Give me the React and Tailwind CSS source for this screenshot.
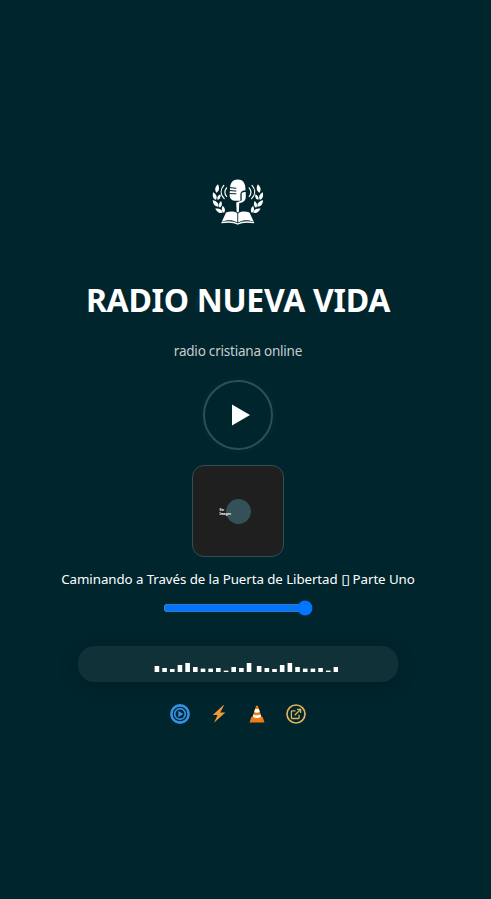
const LEVELS = [6, 4, 3, 7, 9, 5, 3.4, 3.4, 4, 1.4, 5, 4, 9, 6, 4, 3, 7, 9, 5, 3.4, 3.4, 4, 1.4, 5];

function Leaf({ x, y, r, s = 1 }) {
  return <path d="M0 4.3C-2.6 2-2.4-1.2 0-4.3C2.4-1.2 2.6 2 0 4.3Z" transform={`translate(${x} ${y}) rotate(${r}) scale(${s})`} />;
}

function Branch() {
  return (
    <g>
      <Leaf x={5.2} y={9.6} r={10} />
      <Leaf x={2.6} y={17} r={-20} s={0.95} />
      <Leaf x={7} y={18} r={28} s={0.75} />
      <Leaf x={3.6} y={24.5} r={-42} />
      <Leaf x={8.4} y={25.4} r={12} s={0.8} />
      <Leaf x={7} y={31.6} r={-62} />
      <Leaf x={11.3} y={30.4} r={-10} s={0.85} />
      <path d="M11.8 6.4C8.2 10.5 8.2 15.6 12.2 19.6M14.6 8.8C12.3 11.7 12.3 14.6 14.6 17.5" fill="none" stroke="#fff" strokeWidth="1.2" strokeLinecap="round" />
    </g>
  );
}

function Logo() {
  return (
    <svg width="52" height="46" viewBox="0 0 52 46" fill="#fff">
      <Branch />
      <g transform="translate(51.8 0) scale(-1 1)"><Branch /></g>
      <path d="M18 9.5C18 3.6 21 .4 25.8.4S33.4 3.6 33.4 9.5V11.5C29.5 11.6 28.4 13 28.4 15.8V21.8H23C19 21.5 17.6 19 17.6 15.5Z" />
      <path d="M29.7 13.9Q30.5 12.9 33.8 12.9V17.6C33.8 21.6 31.5 23.6 27.2 24.2L26.8 33.2H24.7L24.2 23.6L29.7 21.6Z" />
      <path d="M17 8.5L24.3 9.3M17 11.5L24.3 12.1M17 14.6L24.3 14.8" stroke="#00252d" strokeWidth="1" />
      <path d="M14 33.4C18.5 32 23.2 32.3 25.3 34.4V43.4C20 40.4 14.5 40.8 9.8 42.8ZM37.5 33.4C33 32 28.3 32.3 26.2 34.4V43.4C31.5 40.4 37 40.8 41.8 42.8Z" />
      <path d="M9.4 43.6C16 42.6 22 42.8 25.7 45C29.5 42.8 35.5 42.6 42.1 43.6" fill="none" stroke="#fff" strokeWidth="1.3" />
    </svg>
  );
}

function Waveform() {
  return (
    <svg width="184" height="10" viewBox="0 0 184 10" fill="#fff">
      {LEVELS.map((h, i) => (
        <rect key={i} x={0.6 + i * 7.68 + (i > 12 ? 2.4 : 0)} y={10 - h} width="4.6" height={h} />
      ))}
    </svg>
  );
}

function PlayerLinks() {
  return (
    <div className="mt-[22px] flex h-5 items-center">
      <svg width="20" height="20" viewBox="0 0 20 20" fill="none">
        <circle cx="10" cy="10" r="8.6" stroke="#3490e6" strokeWidth="2.6" />
        <circle cx="10" cy="10" r="5.3" stroke="#3490e6" strokeWidth="1.7" />
        <path d="M8.3 6.7L13.3 10L8.3 13.3Z" fill="#3490e6" />
      </svg>
      <svg className="ml-[19px]" width="20" height="20" viewBox="0 0 20 20" fill="#f09a38">
        <path d="M14.2 1.2L3.8 11H8.6L5 18.8L16.4 8.5H11.2L15 1.2Z" />
      </svg>
      <svg className="ml-[18px]" width="20" height="20" viewBox="0 0 20 20">
        <path d="M4.3 13H15.7L17.5 18.5H2.5Z" fill="#f27c13" />
        <path d="M9 2Q10 .9 11 2L15 14.5Q10 17.2 5 14.5Z" fill="#f27c13" />
        <path d="M8.1 5.1H11.9L12.8 8Q10 9.4 7.2 8ZM6.4 10.4Q10 12 13.6 10.4L14.3 12.8Q10 15.3 5.7 12.8Z" fill="#fff" />
      </svg>
      <svg className="ml-[19px]" width="20" height="20" viewBox="0 0 20 20" fill="none" stroke="#dfb35b">
        <circle cx="10" cy="10" r="9" strokeWidth="1.7" />
        <path d="M9.5 6.8H6.2Q5.4 6.8 5.4 7.6V13.7Q5.4 14.5 6.2 14.5H12.3Q13.1 14.5 13.1 13.7V10.8M8.7 11.2L14.2 5.7M11 5.3H14.6V8.9" strokeWidth="1.3" />
      </svg>
    </div>
  );
}

export default function App() {
  return (
    <main className="flex h-[899px] w-full flex-col items-center bg-[#00252d] pr-[15px] pt-[179px] font-['Noto_Sans','Open_Sans',sans-serif] text-white">
      <Logo />
      <h1 className="mt-[53px] whitespace-nowrap text-[32px] leading-[43px] font-bold tracking-[-0.3px]">RADIO NUEVA VIDA</h1>
      <p className="mt-5 text-[13.5px] leading-5 tracking-[-0.22px] whitespace-nowrap text-[#c6cccf]">radio cristiana online</p>
      <button className="mt-[19px] flex size-[70px] shrink-0 items-center justify-center rounded-full border-2 border-[#304e55] shadow-[0_0_10px_rgba(255,255,255,0.04)]">
        <svg className="ml-[5px]" width="18" height="22" viewBox="0 0 18 22" fill="#fff"><path d="M0 .5L18 11L0 21.5Z" /></svg>
      </button>
      <div className="mt-[15px] flex size-[92px] shrink-0 items-center justify-center rounded-xl border border-[#2f4f55] bg-[#1f1f1f]">
        <div className="relative size-[25px] rounded-full bg-[#355158]">
          <div className="absolute top-[9px] left-[-6px] text-[3px] leading-[4px] font-bold"><div>Sin</div><div>Imagen</div></div>
        </div>
      </div>
      <p className="mt-[12px] h-5 text-[13.3px] leading-5 tracking-[-0.07px] whitespace-nowrap">
        Caminando a Través de la Puerta de Libertad <span className="ml-px inline-block scale-x-130 font-['DejaVu_Sans'] leading-none">▯</span> Parte Uno
      </p>
      <input type="range" defaultValue="100" className="mt-[11px] h-4 w-[150px] shrink-0 accent-[#0075ff]" />
      <div className="mt-[30px] flex h-9 w-80 shrink-0 items-end justify-center rounded-2xl bg-[#103138] pb-[10px] pl-[15px] shadow-[0_4px_20px_rgba(0,0,0,0.2)]">
        <Waveform />
      </div>
      <PlayerLinks />
    </main>
  );
}
